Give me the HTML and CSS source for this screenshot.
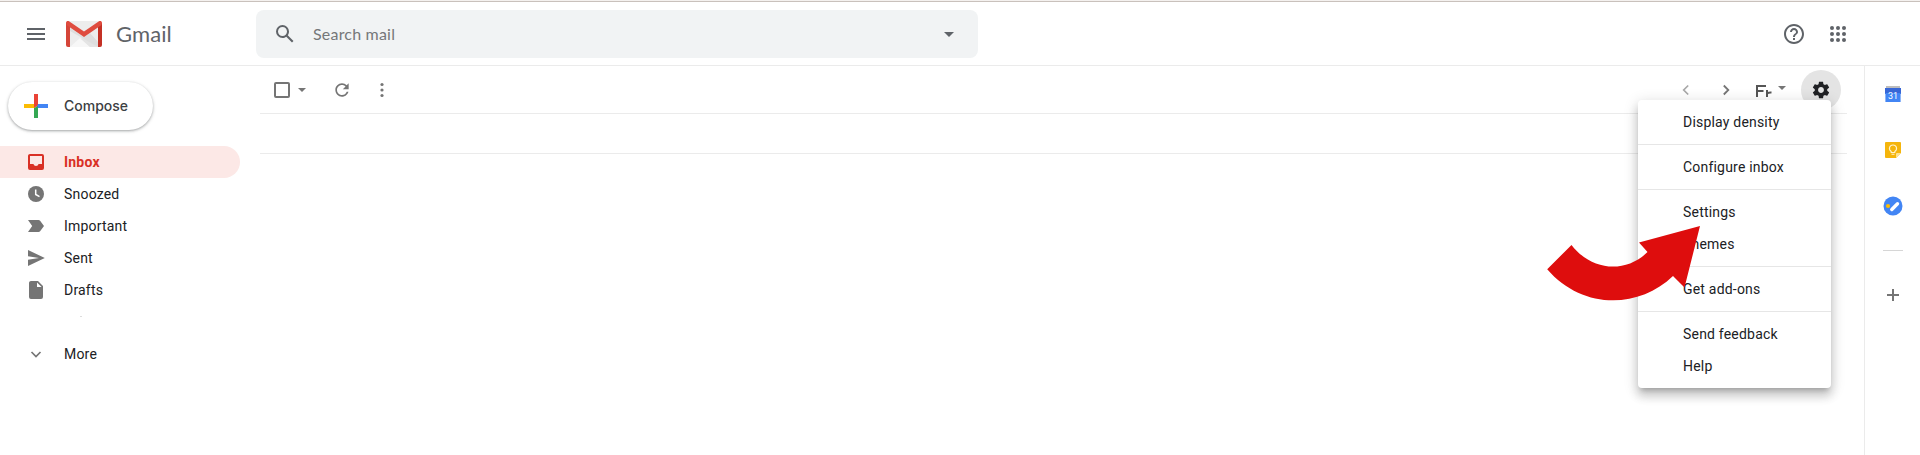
FILE: index.html
```html
<!DOCTYPE html>
<html lang="en">
<head>
<meta charset="utf-8">
<title>Gmail</title>
<link rel="stylesheet" href="styles.css">
</head>
<body>
<header class="header">
  <div class="brand">
    <svg class="menu-icon" width="24" height="24" viewBox="0 0 24 24" fill="#5f6368"><path d="M3 18h18v-2H3zm0-5h18v-2H3zm0-7v2h18V6z"/></svg>
    <svg class="logo" width="36" height="26" viewBox="0 0 36 26">
      <path d="M2 0h32v26H2z" fill="#ededed"/>
      <path d="M4 26 14 17l10 9z" fill="#f7f7f7"/>
      <path d="M15 18l3-2 14 10H24z" fill="#e4e4e4"/>
      <path d="M4 7l14 9 6-4 8 9v5L4 10z" fill="#dedede"/>
      <path d="M0 2h4v24H2a2 2 0 0 1-2-2z" fill="#d54539"/>
      <path d="M32 2h4v22a2 2 0 0 1-2 2h-2z" fill="#c43125"/>
      <path d="M0 2a2 2 0 0 1 3.400-1.500L18 10.500 32.600.5A2 2 0 0 1 36 2c0 1-.4 1.800-1.200 2.400L18 16 1.200 4.400A3 3 0 0 1 0 2z" fill="#df4c3f"/>
    </svg>
    <span class="brand-name">Gmail</span>
  </div>
  <div class="search">
    <svg width="24" height="24" viewBox="0 0 24 24" fill="#5f6368"><path d="M20.490 19l-5.730-5.730C15.530 12.200 16 10.910 16 9.500A6.500 6.500 0 1 0 9.500 16c1.410 0 2.700-.47 3.770-1.240L19 20.490 20.490 19zM5 9.500C5 7.010 7.010 5 9.500 5S14 7.010 14 9.500 11.990 14 9.500 14 5 11.990 5 9.500z"/></svg>
    <span class="search-text">Search mail</span>
    <svg width="24" height="24" viewBox="0 0 24 24" fill="#5f6368"><path d="M7 10l5 5 5-5z"/></svg>
  </div>
  <div class="header-actions">
    <svg width="24" height="24" viewBox="0 0 24 24" fill="#5f6368"><path d="M11 18h2v-2h-2v2zm1-16C6.480 2 2 6.480 2 12s4.480 10 10 10 10-4.480 10-10S17.520 2 12 2zm0 18c-4.410 0-8-3.590-8-8s3.590-8 8-8 8 3.590 8 8-3.590 8-8 8zm0-14c-2.210 0-4 1.790-4 4h2c0-1.100.9-2 2-2s2 .9 2 2c0 2-3 1.750-3 5h2c0-2.250 3-2.500 3-5 0-2.210-1.790-4-4-4z"/></svg>
    <svg width="24" height="24" viewBox="0 0 24 24" fill="#5f6368"><circle cx="6" cy="6" r="2"/><circle cx="12" cy="6" r="2"/><circle cx="18" cy="6" r="2"/><circle cx="6" cy="12" r="2"/><circle cx="12" cy="12" r="2"/><circle cx="18" cy="12" r="2"/><circle cx="6" cy="18" r="2"/><circle cx="12" cy="18" r="2"/><circle cx="18" cy="18" r="2"/></svg>
  </div>
</header>
<div class="body">
  <nav class="sidebar">
    <div class="compose">
      <svg width="24" height="24" viewBox="0 0 24 24"><path d="M10 0h4v12l-4 2z" fill="#ea4335"/><path d="M14 10h10v4H12z" fill="#4285f4"/><path d="M10 14l4-2v12h-4z" fill="#34a853"/><path d="M0 10h10l2 2-2 2H0z" fill="#fbbc04"/><path d="M10 10h4l-4 4z" fill="#ea4335"/></svg>
      <span>Compose</span>
    </div>
    <div class="nav-item active">
      <svg width="20" height="20" viewBox="0 0 20 20"><path d="M4 2h12a2 2 0 0 1 2 2v12a2 2 0 0 1-2 2H4a2 2 0 0 1-2-2V4c0-1.100.9-2 2-2zm0 2v8h3.400a2.700 2.700 0 0 0 5.200 0H16V4z" fill="#d93025" fill-rule="evenodd"/></svg>
      <span>Inbox</span>
    </div>
    <div class="nav-item">
      <svg width="20" height="20" viewBox="0 0 20 20"><circle cx="10" cy="10" r="8" fill="#757575"/><path d="M9.700 5.500v5l3.800 2.200" fill="none" stroke="#fff" stroke-width="1.500"/></svg>
      <span>Snoozed</span>
    </div>
    <div class="nav-item">
      <svg width="20" height="20" viewBox="0 0 20 20" fill="#757575"><path d="M2 4h10.500c.7 0 1.200.3 1.600.8L18 10l-3.900 5.200c-.4.500-.9.800-1.600.8H2l4.200-6z"/></svg>
      <span>Important</span>
    </div>
    <div class="nav-item">
      <svg width="20" height="20" viewBox="0 0 20 20" fill="#757575"><path d="M2 2l16.800 8L2 18v-6.200L13 10 2 8.200z"/></svg>
      <span>Sent</span>
    </div>
    <div class="nav-item">
      <svg width="20" height="20" viewBox="0 0 20 20"><path d="M5 1h7l5 5v11a2 2 0 0 1-2 2H5a2 2 0 0 1-2-2V3c0-1.100.9-2 2-2zm6 1.600V7h4.600z" fill="#757575" fill-rule="evenodd"/></svg>
      <span>Drafts</span>
    </div>
    <div class="nav-item blank"><i class="speck"></i></div>
    <div class="nav-item">
      <svg width="20" height="20" viewBox="0 0 20 20"><path d="M5.500 8l4.500 4.500L14.500 8" fill="none" stroke="#757575" stroke-width="1.700"/></svg>
      <span>More</span>
    </div>
  </nav>
  <main class="main">
    <div class="toolbar">
      <svg class="checkbox" width="16" height="16" viewBox="0 0 16 16"><rect x="1" y="1" width="14" height="14" rx="1" fill="none" stroke="#757575" stroke-width="2"/></svg>
      <svg class="check-caret" width="8" height="4" viewBox="0 0 8 4" fill="#757575"><path d="M0 0h8L4 4z"/></svg>
      <svg class="refresh" width="20" height="20" viewBox="0 0 24 24" fill="#757575"><path d="M17.650 6.350C16.200 4.900 14.210 4 12 4c-4.420 0-7.990 3.580-7.990 8s3.570 8 7.990 8c3.730 0 6.840-2.550 7.730-6h-2.080c-.82 2.330-3.040 4-5.650 4-3.310 0-6-2.690-6-6s2.690-6 6-6c1.660 0 3.140.69 4.220 1.780L13 11h7V4l-2.350 2.350z"/></svg>
      <svg class="more" width="20" height="20" viewBox="0 0 20 20" fill="#757575"><circle cx="10" cy="4.500" r="1.600"/><circle cx="10" cy="10" r="1.600"/><circle cx="10" cy="15.500" r="1.600"/></svg>
      <div class="tools-right">
        <svg width="20" height="20" viewBox="0 0 20 20"><path d="M12.200 5.500L7.700 10l4.500 4.500" fill="none" stroke="#a8a8a8" stroke-width="1.700"/></svg>
        <svg class="next" width="20" height="20" viewBox="0 0 20 20"><path d="M7.800 5.500l4.500 4.500-4.500 4.500" fill="none" stroke="#757575" stroke-width="1.800"/></svg>
        <svg class="input-tool" width="16" height="12" viewBox="0 0 16 12" fill="none" stroke="#555" stroke-width="2"><path d="M1 12V1h9M1 6h6.500M11 5v7M11 9c.5-1.300 1.800-1.700 4.500-1.500"/></svg>
        <svg class="input-caret" width="8" height="4" viewBox="0 0 8 4" fill="#757575"><path d="M0 0h8L4 4z"/></svg>
        <div class="gear"><svg width="20" height="20" viewBox="0 0 24 24" fill="#202124"><path d="M19.430 12.980c.04-.32.070-.64.070-.98s-.03-.66-.07-.98l2.110-1.650c.19-.15.240-.42.120-.64l-2-3.460c-.12-.22-.39-.3-.61-.22l-2.490 1c-.52-.4-1.080-.73-1.690-.98l-.38-2.650C14.460 2.180 14.250 2 14 2h-4c-.25 0-.46.18-.49.42l-.38 2.650c-.61.25-1.170.59-1.690.98l-2.490-1c-.23-.09-.49 0-.61.22l-2 3.460c-.13.220-.07.490.12.640l2.110 1.650c-.04.320-.07.650-.07.980s.03.660.07.980l-2.110 1.650c-.19.150-.24.420-.12.640l2 3.460c.12.220.39.300.61.220l2.490-1c.52.400 1.080.730 1.690.980l.38 2.650c.03.240.24.420.49.420h4c.25 0 .46-.18.490-.42l.38-2.650c.61-.25 1.170-.59 1.690-.98l2.490 1c.23.090.49 0 .61-.22l2-3.460c.12-.22.070-.49-.12-.64l-2.110-1.650zM12 15.500c-1.930 0-3.500-1.570-3.500-3.500s1.570-3.500 3.500-3.500 3.500 1.570 3.500 3.500-1.570 3.500-3.500 3.500z"/></svg></div>
      </div>
    </div>
    <div class="list-row"></div>
  </main>
  <aside class="addons">
    <svg width="16" height="16" viewBox="0 0 16 16"><path d="M1 0h14v2H1z" fill="#bdbdbd"/><path d="M0 2h16v6H0z" fill="#3867d6"/><path d="M.4 7h15.200v9H.4z" fill="#4285f4"/><text x="8" y="13" text-anchor="middle" class="cal-day">31</text></svg>
    <svg width="16" height="16" viewBox="0 0 16 16"><path d="M1 0h14a1 1 0 0 1 1 1v10l-5 5H1a1 1 0 0 1-1-1V1a1 1 0 0 1 1-1z" fill="#f5b50c"/><path d="M11 16v-4a1 1 0 0 1 1-1h4z" fill="#fde293"/><path d="M6.200 9.500C3 7.300 4.500 3 8 3s5 4.300 1.800 6.500v1H6.200zM6.500 12.300h3" fill="none" stroke="#fff3cf" stroke-width="1.100"/></svg>
    <svg class="tasks" width="20" height="20" viewBox="0 0 20 20"><circle cx="10" cy="10" r="9.500" fill="#4285f4"/><path d="M8.800 13.500l5.700-5.700" stroke="#fff" stroke-width="3.400" stroke-linecap="round"/><circle cx="5" cy="10" r="2.100" fill="#fbbc04"/></svg>
    <div class="rule"></div>
    <svg width="12" height="12" viewBox="0 0 12 12"><path d="M6 0v12M0 6h12" stroke="#757575" stroke-width="2"/></svg>
  </aside>
</div>
<div class="settings-menu">
  <div class="menu-item">Display density</div>
  <hr class="separator">
  <div class="menu-item">Configure inbox</div>
  <hr class="separator">
  <div class="menu-item">Settings</div>
  <div class="menu-item">Themes</div>
  <hr class="separator">
  <div class="menu-item">Get add-ons</div>
  <hr class="separator">
  <div class="menu-item">Send feedback</div>
  <div class="menu-item">Help</div>
</div>
<svg class="pointer" width="154" height="77" viewBox="0 0 154 77"><path d="M0.200 44.200L24.500 20C46 47.500 80 47.500 100.500 27L92 17.500 153 1 137.500 62.500 126 51C91 84.500 35 84.500 .2 44.200z" fill="#de0d0d"/></svg>
</body>
</html>
```
FILE: styles.css
```css
* { box-sizing: border-box; }
body {
  margin: 0;
  height: 455px;
  overflow: hidden;
  position: relative;
  background: #fff;
  color: #202124;
  font: 14px/20px Roboto, sans-serif;
  letter-spacing: .2px;
  display: flex;
  flex-direction: column;
}
svg { display: block; flex: none; }

.header {
  height: 66px;
  border-bottom: 1px solid #ebebeb;
  padding: 9px 67px 0 24px;
  display: flex;
  align-items: flex-start;
  background: linear-gradient(#f4f1ef 0 1px, #c9c1bc 1px 2px, #fff 2px);
}
.brand {
  width: 232px;
  height: 50px;
  display: flex;
  align-items: center;
}
.logo { margin-left: 18px; }
.brand-name {
  margin-left: 14px;
  font: 22px/28px Lato, sans-serif;
  letter-spacing: .1px;
  color: #5f6368;
}
.search {
  width: 722px;
  height: 48px;
  margin-top: 1px;
  padding: 0 17px 0 17px;
  border-radius: 8px;
  background: #f1f3f4;
  display: flex;
  align-items: center;
}
.search-text {
  flex: 1;
  margin-left: 16px;
  font: 16px/24px Lato, sans-serif;
  letter-spacing: .2px;
  color: #757779;
}
.header-actions {
  height: 50px;
  margin-left: auto;
  display: flex;
  align-items: center;
  gap: 20px;
  padding-right: 3px;
}

.body { flex: 1; display: flex; }
.sidebar { flex: none; width: 260px; padding-top: 16px; }
.compose {
  width: 145px;
  height: 48px;
  margin: 0 0 16px 8px;
  padding-left: 16px;
  border-radius: 24px;
  display: flex;
  align-items: center;
  gap: 16px;
  font: 500 14px/20px Inter, sans-serif;
  letter-spacing: 0;
  color: #3c4043;
  box-shadow: 0 1px 2px rgba(60,64,67,.3), 0 1px 3px 1px rgba(60,64,67,.15);
}
.nav-item {
  width: 240px;
  height: 32px;
  padding-left: 26px;
  display: flex;
  align-items: center;
  gap: 18px;
}
.active {
  color: #d93025;
  font-weight: bold;
  background: #fce8e6;
  border-radius: 0 16px 16px 0;
}
.blank { align-items: flex-start; padding: 10px 0 0 80px; }
.speck { width: 2px; height: 1px; background: #ddd; }

.main { flex: none; width: 1587px; }
.toolbar {
  height: 48px;
  padding-left: 14px;
  display: flex;
  align-items: center;
  border-bottom: 1px solid #ebebeb;
}
.check-caret { margin-left: 8px; }
.refresh { margin-left: 26px; }
.more { margin-left: 20px; }
.tools-right {
  margin-left: auto;
  display: flex;
  align-items: center;
  padding-right: 6px;
}
.next { margin-left: 20px; }
.input-tool { margin: 3px 0 0 20px; }
.input-caret { margin: -3px 15px 0 6px; }
.gear {
  width: 40px;
  height: 40px;
  border-radius: 50%;
  background: #e4e4e4;
  display: flex;
  align-items: center;
  justify-content: center;
}
.list-row { height: 40px; border-bottom: 1px solid #ebebeb; }

.addons {
  width: 56px;
  margin-left: 17px;
  padding-top: 20px;
  border-left: 1px solid #ebebeb;
  display: flex;
  flex-direction: column;
  align-items: center;
  gap: 40px;
}
.tasks { margin-top: -2px; }
.rule { width: 20px; height: 1px; margin: -6px 0 -2px; background: #d6d6d6; }
.cal-day { font: 9px Roboto, sans-serif; letter-spacing: 0; fill: #fff; }

.settings-menu {
  position: absolute;
  left: 1638px;
  top: 100px;
  width: 193px;
  padding: 6px 0;
  border-radius: 4px;
  background: #fff;
  box-shadow: 0 8px 10px 1px rgba(0,0,0,.14), 0 3px 14px 2px rgba(0,0,0,.12), 0 5px 5px -3px rgba(0,0,0,.2);
}
.menu-item { height: 32px; padding: 6px 0 6px 45px; }
.separator { height: 1px; margin: 6px 0; border: 0; background: #e6e6e6; }
.pointer { position: absolute; left: 1547px; top: 225px; }
```
